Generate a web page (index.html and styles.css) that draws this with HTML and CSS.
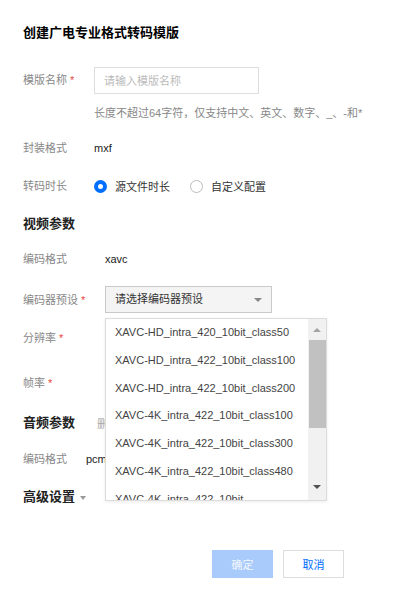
FILE: index.html
```html
<!DOCTYPE html>
<html lang="zh-CN">

<head>
    <meta charset="UTF-8">
    <meta name="viewport" content="width=device-width, initial-scale=1.0">
    <title>创建广电专业格式转码模版</title>
    <link rel="stylesheet" href="styles.css">
</head>

<body>
    <div class="dialog">
        <h1 class="title">创建广电专业格式转码模版</h1>

        <div class="row row-name">
            <span class="label w71">模版名称<i class="req">*</i></span>
            <div class="field">
                <input class="input" type="text" placeholder="请输入模版名称">
                <p class="hint">长度不超过64字符，仅支持中文、英文、数字、_、-和*</p>
            </div>
        </div>

        <div class="row mt17">
            <span class="label w71">封装格式</span>
            <span class="value">mxf</span>
        </div>

        <div class="row mt18">
            <span class="label w71">转码时长</span>
            <label class="radio checked"><i></i>源文件时长</label>
            <label class="radio"><i></i>自定义配置</label>
        </div>

        <h2 class="section mt18">视频参数</h2>

        <div class="row mt15">
            <span class="label w82">编码格式</span>
            <span class="value">xavc</span>
        </div>

        <div class="row mt17">
            <span class="label w82">编码器预设<i class="req">*</i></span>
            <div class="select-wrap">
                <div class="select">请选择编码器预设</div>
                <div class="dropdown">
                    <ul class="options">
                        <li>XAVC-HD_intra_420_10bit_class50</li>
                        <li>XAVC-HD_intra_422_10bit_class100</li>
                        <li>XAVC-HD_intra_422_10bit_class200</li>
                        <li>XAVC-4K_intra_422_10bit_class100</li>
                        <li>XAVC-4K_intra_422_10bit_class300</li>
                        <li>XAVC-4K_intra_422_10bit_class480</li>
                        <li>XAVC-4K_intra_422_10bit</li>
                    </ul>
                    <div class="scrollbar">
                        <span class="arrow up"></span>
                        <span class="thumb"></span>
                        <span class="arrow down"></span>
                    </div>
                </div>
            </div>
        </div>

        <div class="row mt15">
            <span class="label w82">分辨率<i class="req">*</i></span>
        </div>

        <div class="row mt25">
            <span class="label w82">帧率<i class="req">*</i></span>
        </div>

        <div class="section-row mt20">
            <h2 class="section">音频参数</h2>
            <a class="link">删除</a>
        </div>

        <div class="row mt16">
            <span class="label w63">编码格式</span>
            <span class="value">pcm</span>
        </div>

        <h2 class="section fold mt18">高级设置</h2>

        <div class="footer">
            <button class="btn btn-primary">确定</button>
            <button class="btn">取消</button>
        </div>
    </div>
</body>

</html>
```

FILE: styles.css
```css
* {
    margin: 0;
    padding: 0;
    box-sizing: border-box;
}

body {
    font-family: "Liberation Sans", "Noto Sans CJK SC", sans-serif;
    font-size: 11px;
    color: #333;
    background-color: #fff;
}

li {
    list-style: none;
}

.dialog {
    width: 398px;
    padding: 23px 0 0 23px;
}

.title {
    font-size: 13px;
    line-height: 20px;
    font-weight: bold;
    color: #000;
}

.mt15 { margin-top: 15px; }
.mt16 { margin-top: 16px; }
.mt17 { margin-top: 17px; }
.mt18 { margin-top: 18px; }
.mt20 { margin-top: 20px; }
.mt25 { margin-top: 25px; }

.row {
    display: flex;
    align-items: center;
    min-height: 20px;
}

.row-name {
    align-items: flex-start;
    margin-top: 24px;
}

.row-name .label {
    line-height: 27px;
}

.label {
    flex-shrink: 0;
    color: #888;
    line-height: 20px;
}

.w63 { width: 63px; }
.w71 { width: 71px; }
.w82 { width: 82px; }

.req {
    font-style: normal;
    color: #e54545;
    margin-left: 3px;
}

.value {
    color: #222;
}

.input {
    display: block;
    width: 165px;
    height: 27px;
    padding-left: 9px;
    border: 1px solid #ddd;
    font: inherit;
    color: #333;
    outline: none;
}

.input::placeholder {
    color: #bbb;
}

.hint {
    margin-top: 11px;
    line-height: 16px;
    color: #888;
    white-space: nowrap;
}

.radio {
    display: flex;
    align-items: center;
    margin-right: 20px;
    color: #333;
}

.radio i {
    width: 13px;
    height: 13px;
    margin-right: 8px;
    border: 1px solid #bbb;
    border-radius: 50%;
    background-color: #fff;
}

.radio.checked i {
    border: 4px solid #006eff;
}

.section {
    font-size: 13px;
    line-height: 20px;
    font-weight: bold;
    color: #222;
}

.section-row {
    display: flex;
    align-items: center;
}

.link {
    margin-left: 22px;
    color: #aaa;
}

.fold::after {
    content: "";
    display: inline-block;
    margin-left: 5px;
    vertical-align: middle;
    border-left: 3.5px solid transparent;
    border-right: 3.5px solid transparent;
    border-top: 4px solid #999;
}

.select-wrap {
    position: relative;
}

.select {
    position: relative;
    width: 167px;
    height: 27px;
    padding-left: 9px;
    line-height: 25px;
    border: 1px solid #c9c9c9;
    background-color: #f4f4f4;
    color: #333;
}

.select::after {
    content: "";
    position: absolute;
    right: 9px;
    top: 11px;
    border-left: 4px solid transparent;
    border-right: 4px solid transparent;
    border-top: 4px solid #888;
}

.dropdown {
    position: absolute;
    left: 0;
    top: 32px;
    z-index: 10;
    display: flex;
    width: 222px;
    height: 183px;
    border: 1px solid #dcdcdc;
    background-color: #fff;
    box-shadow: 0 1px 3px rgba(0, 0, 0, .08);
}

.options {
    flex: 1;
    overflow: hidden;
}

.options li {
    height: 27.8px;
    line-height: 27.8px;
    padding-left: 9px;
    color: #444;
    white-space: nowrap;
}

.scrollbar {
    position: relative;
    width: 18px;
    background-color: #f1f1f1;
}

.scrollbar .thumb {
    position: absolute;
    left: 1px;
    right: 0;
    top: 21px;
    height: 88px;
    background-color: #c1c1c1;
}

.scrollbar .arrow {
    position: absolute;
    left: 5px;
    border-left: 4px solid transparent;
    border-right: 4px solid transparent;
}

.scrollbar .up {
    top: 9px;
    border-bottom: 4px solid #a3a3a3;
}

.scrollbar .down {
    bottom: 11px;
    border-top: 4px solid #505050;
}

.footer {
    display: flex;
    justify-content: flex-end;
    gap: 10px;
    margin-top: 43px;
    padding-right: 54px;
}

.btn {
    width: 61px;
    height: 28px;
    border: 1px solid #ddd;
    background-color: #fff;
    font: inherit;
    color: #006eff;
}

.btn-primary {
    border-color: #a9cbfb;
    background-color: #a9cbfb;
    color: #f4f8ff;
}
```
